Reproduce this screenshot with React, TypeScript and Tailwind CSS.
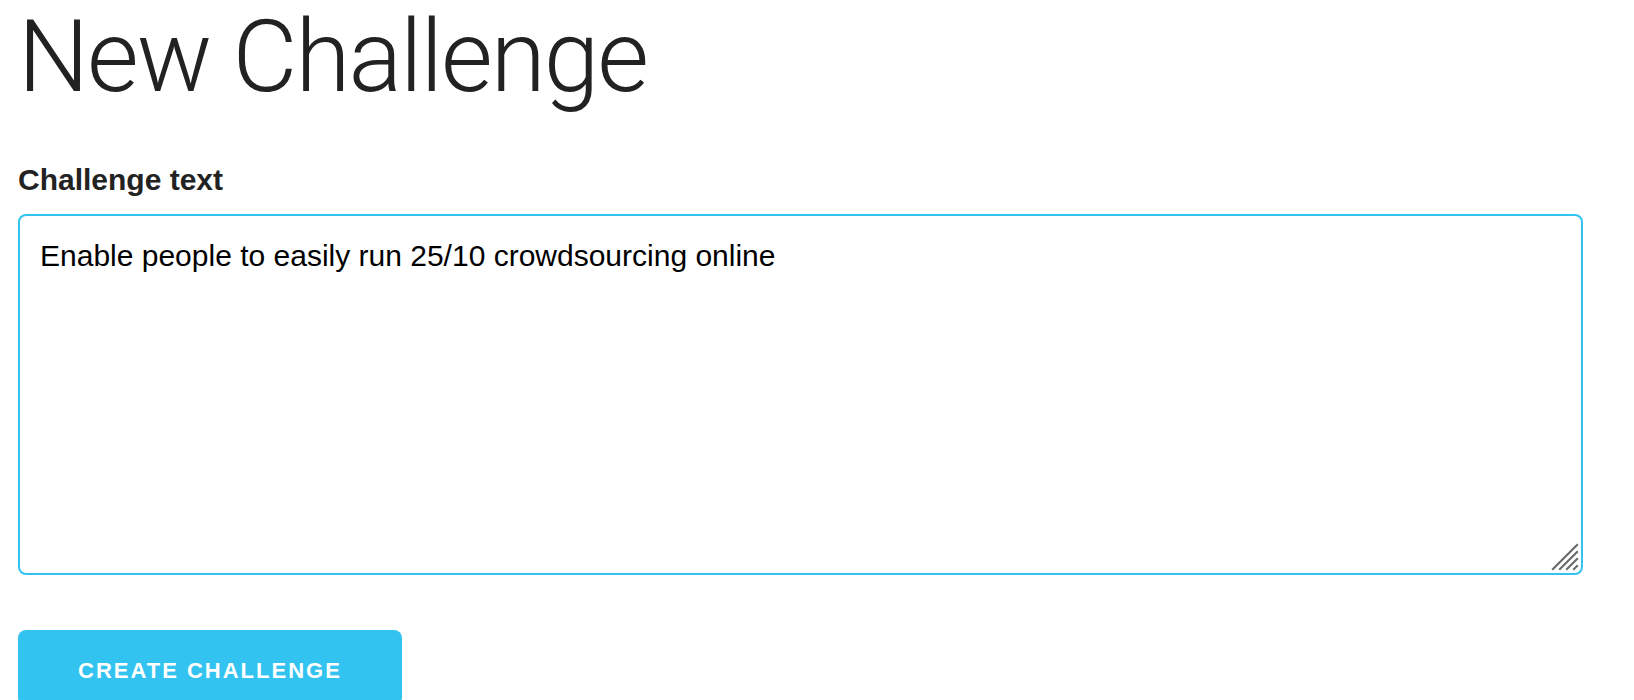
import React from "react";

const ResizeGrip: React.FC = () => (
  <svg
    className="pointer-events-none absolute right-[4px] bottom-[4px]"
    width="28"
    height="28"
    viewBox="0 0 28 28"
    stroke="#6b6b6b"
    strokeWidth="2.2"
    strokeLinecap="square"
  >
    <line x1="2" y1="26" x2="26" y2="2" />
    <line x1="9" y1="26" x2="26" y2="9" />
    <line x1="16" y1="26" x2="26" y2="16" />
    <line x1="23" y1="26" x2="26" y2="23" />
  </svg>
);

const NewChallenge: React.FC = () => {
  return (
    <div className="min-h-screen bg-white px-[18px] font-['Liberation_Sans',Arial,sans-serif] text-[#222]">
      <h1 className="font-['Roboto',sans-serif] text-[100px] font-light leading-[1.14] tracking-[-2px] text-[#222] mb-[42px]">
        New Challenge
      </h1>

      <form onSubmit={(e) => e.preventDefault()}>
        <label
          htmlFor="challenge-text"
          className="block text-[30px] font-bold leading-[1.6] mb-[10px] text-[#222]"
        >
          Challenge text
        </label>
        <div className="relative w-[1565px]">
          <textarea
            id="challenge-text"
            defaultValue="Enable people to easily run 25/10 crowdsourcing online"
            className="block w-full h-[361px] resize-none border-2 border-[#33c3f0] rounded-lg px-5 pt-[16px] pb-3 text-[30px] leading-[1.6] text-black outline-none"
          />
          <ResizeGrip />
        </div>

        <button
          type="submit"
          className="mt-[55px] h-[76px] px-[60px] pt-[4px] rounded-lg bg-[#33c3f0] text-white text-[22px] font-bold uppercase tracking-[2px]"
        >
          Create Challenge
        </button>
      </form>
    </div>
  );
};

export default function App() {
  return <NewChallenge />;
}
